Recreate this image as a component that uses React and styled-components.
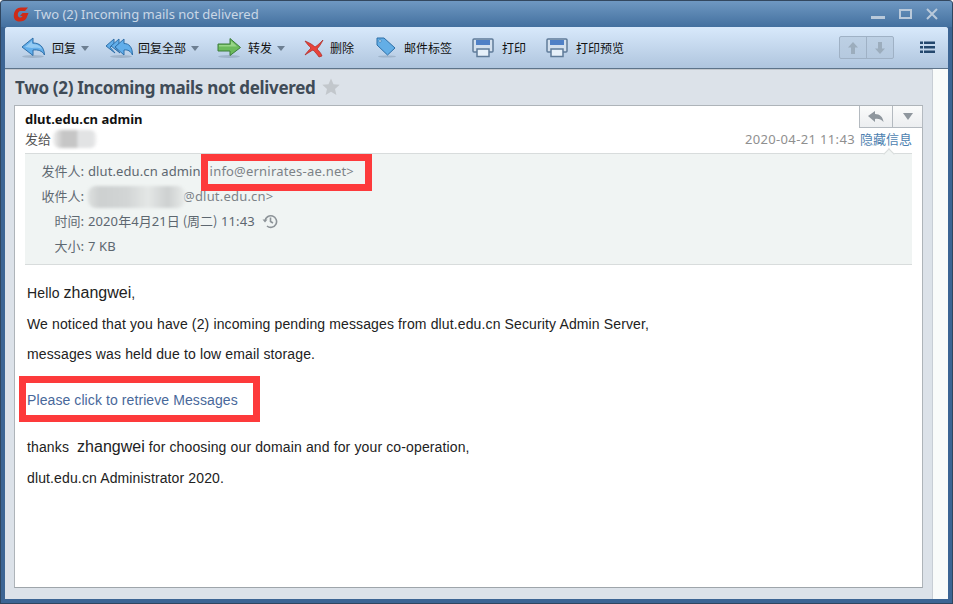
import React from 'react';
import styled, { createGlobalStyle } from 'styled-components';

const Global = createGlobalStyle`
  html, body { margin: 0; padding: 0; background: #fff; }
  #root { width: 953px; height: 604px; }
  * { box-sizing: border-box; }
`;
const UI = `"Noto Sans", "Noto Sans CJK SC", sans-serif`;
const CJK = `"Noto Sans CJK SC", "Noto Sans", sans-serif`;

const Win = styled.div`
  position: relative; width: 953px; height: 604px; overflow: hidden;
  background: #3c6594; border: 1px solid #2f4660; border-top-color: #33475f;
  border-radius: 4px 4px 0 0; display: flex; flex-direction: column;
  padding: 0 4px 4px 4px;
`;
const TitleBar = styled.div`
  height: 26px; flex: none; margin: 0 -4px; padding: 0 12px 0 12px; display: flex; align-items: center;
  background: linear-gradient(#6f98c2, #43709f);
`;
const TitleText = styled.div`
  margin-left: 5px; font: 13px ${UI}; color: #c9d7e6; flex: 1; white-space: nowrap;
`;
const WinBtns = styled.div`display: flex; align-items: center; gap: 14px; margin-right: 2px;`;
const Body = styled.div`flex: 1; display: flex; flex-direction: column; min-height: 0; background: #dce2e9; border-radius: 3px 3px 0 0;`;
const Toolbar = styled.div`
  height: 42px; flex: none; display: flex; align-items: center; padding: 0 13px 0 16px;
  background: linear-gradient(#d8e9fb, #afc5de); border-bottom: 1px solid #5d7389; border-radius: 3px 3px 0 0;
  box-shadow: 0 1px 0 #c3c8ce;
`;
const TBtn = styled.div`
  display: flex; align-items: center; font: 12px ${CJK}; color: #111; margin-right: ${p => p.$mr}px; white-space: nowrap;
  svg { flex: none; }
`;
const Label = styled.span`margin-left: ${p => p.$ml ?? 6}px;`;
const Caret = styled.span`
  width: 0; height: 0; margin-left: 5px; margin-top: 2px; border-left: 4px solid transparent; border-right: 4px solid transparent; border-top: 5px solid #6d7f92;
`;
const Spacer = styled.div`flex: 1;`;
const Pager = styled.div`
  display: flex; width: 55px; height: 23px; border: 1px solid #9fb1c5; border-radius: 2px; margin-right: 26px;
  background: linear-gradient(#bdd0e4, #b5c9df);
`;
const PagerCell = styled.div`flex: 1; display: flex; align-items: center; justify-content: center; & + & { border-left: 1px solid #9fb1c5; }`;
const Main = styled.div`flex: 1; display: flex; min-height: 0;`;
const Content = styled.div`flex: 1; padding: 3px 9px 11px 9px; display: flex; flex-direction: column; min-width: 0;`;
const Scroll = styled.div`width: 16px; flex: none; background: #f9fbfa; border-left: 1px solid #c8ced5;`;
const Subject = styled.div`
  height: 30px; flex: none; display: flex; align-items: center; padding-left: 1px; font: bold 17px ${UI}; color: #3f4b57; gap: 6px; white-space: nowrap; letter-spacing: -.32px;
`;
const Card = styled.div`
  position: relative; flex: 1; background: #fff; border: 1px solid #aeb4b9; border-bottom-color: #9ea5aa; display: flex; flex-direction: column; margin-top: 3px;
`;
const CardHead = styled.div`height: 47px; flex: none; padding: 4px 10px 0 10px; position: relative;`;
const Sender = styled.div`font: bold 13px/18px ${UI}; color: #111;`;
const ToLine = styled.div`display: flex; justify-content: space-between; font: 13px/17px ${CJK}; color: #555; margin-top: 2px;`;
const Stamp = styled.div`color: #8f8f8f; font-family: ${UI}; letter-spacing: .35px; span { color: #4d7fb0; font-family: ${CJK}; margin-left: 5px; letter-spacing: 0; }`;
const CornerBtns = styled.div`
  position: absolute; right: -1px; top: 0; display: flex; height: 22px; border: 1px solid #b4bac0; border-top: 0;
  background: linear-gradient(#fafbfb, #eceef0);
`;
const CornerCell = styled.div`width: ${p => p.$w}px; display: flex; align-items: center; justify-content: center; & + & { border-left: 1px solid #b4bac0; }`;
const Details = styled.div`
  flex: none; height: 112px; margin: 0 10px; padding: 4px 0 0 0; background: #f0f4f3; border-top: 1px solid #d8dcdc; border-bottom: 1px solid #d8dcdc;
  font: 13px ${UI}; color: #5d6770; position: relative;
  &::before { content: ''; position: absolute; right: 19px; top: -4px; width: 7px; height: 7px; background: #f0f4f3; border-left: 1px solid #d8dcdc; border-top: 1px solid #d8dcdc; transform: rotate(45deg); }
`;
const DRow = styled.div`display: flex; height: 25px; align-items: center; white-space: nowrap;`;
const DKey = styled.div`width: 59px; text-align: right; flex: none; font-family: ${CJK}; color: #5f6972;`;
const DVal = styled.div`margin-left: 4px; display: flex; align-items: center; letter-spacing: .1px; span { font-family: ${CJK}; letter-spacing: 0; }`;
const Gray = styled.span`color: #7c8287; font-family: ${UI} !important; margin-left: ${p => p.$ml}px; letter-spacing: .2px !important;`;
const Mail = styled.div`padding: 18px 12px 0 12px; font: 14px/20px "Liberation Sans", Arial, sans-serif; color: #222; letter-spacing: .13px;`;
const P = styled.div`margin-top: ${p => p.$mt}px; white-space: nowrap;`;
const Big = styled.span`font-size: 16px; letter-spacing: 0;`;
const MailLink = styled.a`color: #48689a; text-decoration: none; letter-spacing: .09px;`;
const RedBox = styled.div`
  position: absolute; left: ${p => p.$x}px; top: ${p => p.$y}px; width: ${p => p.$w}px; height: ${p => p.$h}px;
  border: ${p => p.$b}px solid #fd3a3b; pointer-events: none;
`;
const ToSmudge = styled.div`
  position: absolute; left: 38px; top: 24px; width: 44px; height: 18px; border-radius: 7px; filter: blur(1.5px);
  background: linear-gradient(90deg, #f0f0f0 0, #c6c6c6 22%, #c6c6c6 55%, #e2e3e4 56%, #e2e3e4 90%, #f6f6f6 100%);
`;
const RcptSmudge = styled.div`
  position: absolute; left: 63px; top: 32px; width: 97px; height: 22px; border-radius: 8px; filter: blur(1.5px);
  background: linear-gradient(90deg, #dde0df 0, #cdd0d0 12%, #d2d5d5 40%, #e4e7e6 62%, #cdd0d0 82%, #e8ebea 100%);
`;

const Shadow = () => <ellipse cx="12" cy="20.5" rx="11" ry="1.5" fill="#7f93a8" opacity=".45" />;
const Reply = () => (
  <svg width="24" height="23" viewBox="0 0 24 23"><Shadow />
    <path d="M1 11 L12 2 V7 C18 7 23 10 23.500 19 C21 14.500 17 13.500 12 14 V19.500 Z" fill="#62aeea" stroke="#2f6fa8" strokeWidth="1" strokeLinejoin="round" />
    <path d="M4 11 L11 5 V8 C15 8 19 9 21 13 C18 11.500 15 11.500 11 12 Z" fill="#a5d4f5" opacity=".75" />
  </svg>
);
const ReplyAll = () => (
  <svg width="28" height="23" viewBox="0 0 28 23"><ellipse cx="16" cy="20.500" rx="11" ry="1.500" fill="#7f93a8" opacity=".45" />
    <path d="M1 10 L9 3 V8 L5 11 L10 17 Z" fill="#62aeea" stroke="#2f6fa8" strokeWidth="1" strokeLinejoin="round" />
    <path d="M6 10 L14 3 V8 L10 11 L15 17 Z" fill="#62aeea" stroke="#2f6fa8" strokeWidth="1" strokeLinejoin="round" />
    <path d="M10 11 L19 3 V7.500 C24 7.500 27.500 11 27.500 19 C25.500 15 23 13.500 19 14 V19 Z" fill="#62aeea" stroke="#2f6fa8" strokeWidth="1" strokeLinejoin="round" />
  </svg>
);
const Forward = () => (
  <svg width="24" height="23" viewBox="0 0 24 23"><Shadow />
    <path d="M1 8 H13 V2.500 L23.500 11.500 L13 19.500 V15 H1 Z" fill="#6cbb5c" stroke="#3c7d3b" strokeWidth="1" strokeLinejoin="round" />
    <path d="M2 9 H14 V5 L20 10.500 H2 Z" fill="#a4dc93" opacity=".8" />
  </svg>
);
const Del = () => (
  <svg width="20" height="20" viewBox="0 0 20 20">
    <path d="M1 3 C6 5 9 7 11 9 C14 7 16 5 19 2 C17 6 15 9 13 11 C15 13 17 15 18 18 L15 19 C13 16 11 14 9 12 C7 13 4 15 1 17 C3 14 5 12 7 10 C5 8 3 6 1 3 Z" fill="#e8433a" stroke="#aa2822" strokeWidth=".7" />
  </svg>
);
const Tag = () => (
  <svg width="20" height="21" viewBox="0 0 20 21">
    <ellipse cx="11" cy="19.500" rx="9" ry="1" fill="#7f93a8" opacity=".45" />
    <path d="M1 1 H8 L19 11 L11.500 18 L1 8 Z" fill="#63aee6" stroke="#2d6ea6" strokeWidth="1" strokeLinejoin="round" />
    <circle cx="4" cy="4" r="1.300" fill="#d9ecfa" stroke="#2d6ea6" strokeWidth=".6" />
  </svg>
);
const Printer = () => (
  <svg width="22" height="20" viewBox="0 0 22 20">
    <rect x="1" y="1" width="20" height="13" rx="1" fill="#d3e0ee" stroke="#5f7b99" strokeWidth="1.500" />
    <rect x="4" y="2" width="14" height="5" fill="#4f80c6" />
    <rect x="5" y="11" width="12" height="7.500" fill="#e6f0f9" stroke="#5f7b99" strokeWidth="1.500" />
  </svg>
);
const Up = () => <svg width="12" height="14" viewBox="0 0 12 14"><path d="M6 1 L11 6.500 H8 V13 H4 V6.500 H1 Z" fill="#9cadbd" /></svg>;
const Down = () => <svg width="12" height="14" viewBox="0 0 12 14"><path d="M6 13 L11 7.500 H8 V1 H4 V7.500 H1 Z" fill="#9cadbd" /></svg>;
const ListIc = () => (
  <svg width="15" height="13" viewBox="0 0 15 13" fill="#24486e">
    <rect x="0" y="0.500" width="3" height="2.500" /><rect x="4" y="0.500" width="11" height="2.500" />
    <rect x="0" y="5" width="3" height="2.500" /><rect x="4" y="5" width="11" height="2.500" />
    <rect x="0" y="9.500" width="3" height="2.500" /><rect x="4" y="9.500" width="11" height="2.500" />
  </svg>
);
const Logo = () => (
  <svg width="16" height="15" viewBox="0 0 16 15">
    <path d="M15 .5 L12 4 H7.500 C6 4 5 5.500 4.800 7 C4.600 9 5.500 10.500 7 10.500 C8.500 10.500 9.200 9.800 9.500 9 H7 L9.500 6 H15.500 L13.500 11 C12.500 13.500 9.500 14.500 6.500 14.500 C2.500 14.500 .5 12 .8 8 C1.200 3.500 4 .5 8 .5 Z" fill="#cf2b17" />
  </svg>
);
const Star = () => <svg width="18" height="18" viewBox="0 0 18 18"><path d="M9 .5 L11.500 6.300 L17.700 6.800 L13 10.900 L14.400 17 L9 13.800 L3.600 17 L5 10.900 L.3 6.800 L6.500 6.300 Z" fill="#c2c7cc" /></svg>;
const Hist = () => (
  <svg width="16" height="16" viewBox="0 0 16 16" fill="none" stroke="#8d9398" strokeWidth="1.600">
    <path d="M3 8 A5.800 5.800 0 1 1 5 13" /><path d="M.5 6.500 L3 9.500 L5.500 6.500 Z" fill="#8d9398" stroke="none" /><path d="M8.500 4.500 V8.500 L11 10" />
  </svg>
);

export default function App() {
  return (
    <>
      <Global />
      <Win>
        <TitleBar>
          <Logo />
          <TitleText>Two (2) Incoming mails not delivered</TitleText>
          <WinBtns>
            <svg width="14" height="6" viewBox="0 0 14 6" style={{ marginTop: 6 }}><rect width="14" height="3" y="2" fill="#b9c9da" /></svg>
            <svg width="13" height="10" viewBox="0 0 13 10"><rect x="1" y="1" width="11" height="8" fill="none" stroke="#b9c9da" strokeWidth="2" /></svg>
            <svg width="12" height="12" viewBox="0 0 12 12"><path d="M1 1 L11 11 M11 1 L1 11" stroke="#b9c9da" strokeWidth="2" /></svg>
          </WinBtns>
        </TitleBar>
        <Body>
          <Toolbar>
            <TBtn $mr={16}><Reply /><Label $ml={7}>回复</Label><Caret /></TBtn>
            <TBtn $mr={18}><ReplyAll /><Label $ml={5}>回复全部</Label><Caret /></TBtn>
            <TBtn $mr={19}><Forward /><Label $ml={7}>转发</Label><Caret /></TBtn>
            <TBtn $mr={22}><Del /><Label $ml={6}>删除</Label></TBtn>
            <TBtn $mr={20}><Tag /><Label $ml={8}>邮件标签</Label></TBtn>
            <TBtn $mr={20}><Printer /><Label $ml={8}>打印</Label></TBtn>
            <TBtn $mr={0}><Printer /><Label $ml={8}>打印预览</Label></TBtn>
            <Spacer />
            <Pager><PagerCell><Up /></PagerCell><PagerCell><Down /></PagerCell></Pager>
            <ListIc />
          </Toolbar>
          <Main>
            <Content>
              <Subject>Two (2) Incoming mails not delivered <Star /></Subject>
              <Card>
                <CornerBtns>
                  <CornerCell $w={32}>
                    <svg width="16" height="12" viewBox="0 0 16 12"><path d="M0 5 L7 0 V3 C12 3 15 6 15.500 11 C13 8 10 7.500 7 8 V11 Z" fill="#8f979e" /></svg>
                  </CornerCell>
                  <CornerCell $w={30}>
                    <svg width="12" height="9" viewBox="0 0 12 9"><path d="M1 1 H11 L6 8 Z" fill="#8f979e" /></svg>
                  </CornerCell>
                </CornerBtns>
                <CardHead>
                  <Sender>dlut.edu.cn admin</Sender>
                  <ToLine>
                    <span>发给</span>
                    <Stamp>2020-04-21 11:43<span>隐藏信息</span></Stamp>
                  </ToLine>
                  <ToSmudge />
                </CardHead>
                <Details>
                  <DRow><DKey>发件人:</DKey><DVal>dlut.edu.cn admin<Gray $ml={9}>info@ernirates-ae.net&gt;</Gray></DVal></DRow>
                  <DRow><DKey>收件人:</DKey><DVal><Gray $ml={95}>@dlut.edu.cn&gt;</Gray></DVal></DRow>
                  <DRow><DKey>时间:</DKey><DVal>2020<span>年</span>4<span>月</span>21<span>日 (周二)</span>&nbsp;11:43&nbsp;&nbsp;<Hist /></DVal></DRow>
                  <DRow><DKey>大小:</DKey><DVal>7 KB</DVal></DRow>
                  <RcptSmudge />
                </Details>
                <Mail>
                  <P $mt={0}>Hello <Big>zhangwei</Big>,</P>
                  <P $mt={11}>We noticed that you have (2) incoming pending messages from dlut.edu.cn Security Admin Server,</P>
                  <P $mt={10}>messages was held due to low email storage.</P>
                  <P $mt={26}><MailLink>Please click to retrieve Messages</MailLink></P>
                  <P $mt={27}>thanks &nbsp;<Big>zhangwei</Big> for choosing our domain and for your co-operation,</P>
                  <P $mt={11}>dlut.edu.cn Administrator 2020.</P>
                </Mail>
              </Card>
            </Content>
            <Scroll />
          </Main>
        </Body>
        <RedBox $x={200} $y={153} $w={171} $h={37} $b={7} />
        <RedBox $x={18} $y={375} $w={241} $h={46} $b={7} />
      </Win>
    </>
  );
}
